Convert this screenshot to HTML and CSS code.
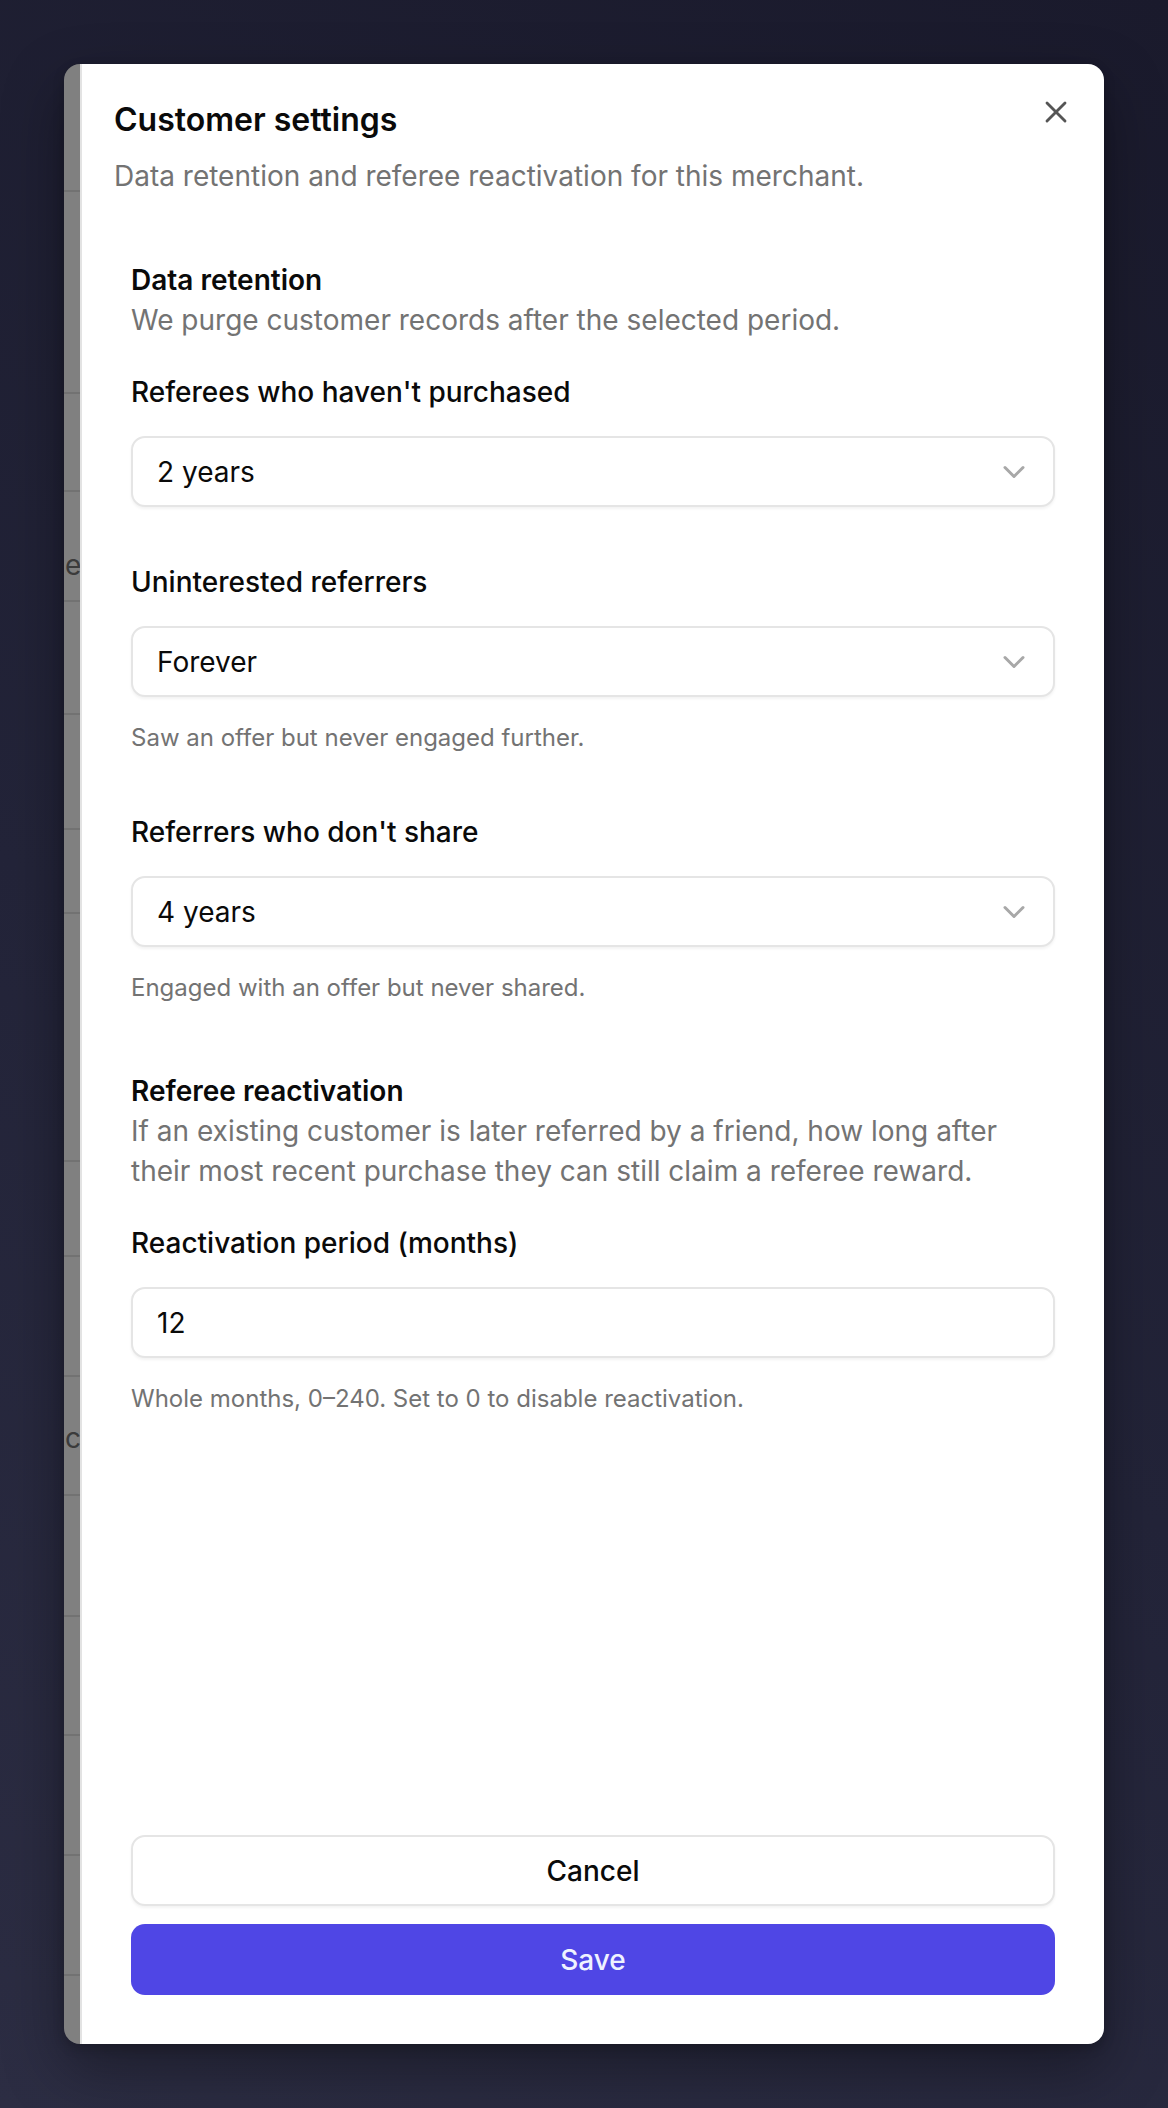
FILE: index.html
```html
<!DOCTYPE html>
<html lang="en">
<head>
<meta charset="utf-8">
<title>Customer settings</title>
<link rel="stylesheet" href="styles.css">
</head>
<body>
<div class="backdrop">
  <div class="dialog">
    <div class="underlay" aria-hidden="true">
      <div class="u-row h128"></div>
      <div class="u-row h202"></div>
      <div class="u-row h98"></div>
      <div class="u-row h110"><span class="u-text t53">e</span></div>
      <div class="u-row h113"></div>
      <div class="u-row h115"></div>
      <div class="u-row h84"></div>
      <div class="u-row h248"></div>
      <div class="u-row h95"></div>
      <div class="u-row h120"></div>
      <div class="u-row h119"><span class="u-text t41">c</span></div>
      <div class="u-row h121"></div>
      <div class="u-row h119"></div>
      <div class="u-row h120"></div>
      <div class="u-row h120"></div>
    </div>

    <section class="sheet">
      <header class="sheet-header">
        <h2 class="sheet-title">Customer settings</h2>
        <p class="sheet-desc">Data retention and referee reactivation for this merchant.</p>
        <button class="close-btn" type="button" aria-label="Close">
          <svg viewBox="0 0 24 24" width="36" height="36" fill="none" stroke="currentColor" stroke-width="1.9" stroke-linecap="round" stroke-linejoin="round"><path d="M18 6 6 18"/><path d="m6 6 12 12"/></svg>
        </button>
      </header>

      <div class="sheet-body">
        <div class="section">
          <h3 class="section-title">Data retention</h3>
          <p class="section-desc">We purge customer records after the selected period.</p>
          <div class="fields">
            <div class="field">
              <label class="field-label">Referees who haven't purchased</label>
              <button class="select" type="button">
                <span>2 years</span>
                <svg viewBox="0 0 24 24" width="36" height="36" fill="none" stroke="currentColor" stroke-width="2" stroke-linecap="round" stroke-linejoin="round"><path d="m6 9 6 6 6-6"/></svg>
              </button>
            </div>
            <div class="field">
              <label class="field-label">Uninterested referrers</label>
              <button class="select" type="button">
                <span>Forever</span>
                <svg viewBox="0 0 24 24" width="36" height="36" fill="none" stroke="currentColor" stroke-width="2" stroke-linecap="round" stroke-linejoin="round"><path d="m6 9 6 6 6-6"/></svg>
              </button>
              <p class="field-help">Saw an offer but never engaged further.</p>
            </div>
            <div class="field">
              <label class="field-label">Referrers who don't share</label>
              <button class="select" type="button">
                <span>4 years</span>
                <svg viewBox="0 0 24 24" width="36" height="36" fill="none" stroke="currentColor" stroke-width="2" stroke-linecap="round" stroke-linejoin="round"><path d="m6 9 6 6 6-6"/></svg>
              </button>
              <p class="field-help">Engaged with an offer but never shared.</p>
            </div>
          </div>
        </div>

        <div class="section section-second">
          <h3 class="section-title">Referee reactivation</h3>
          <p class="section-desc">If an existing customer is later referred by a friend, how long after their most recent purchase they can still claim a referee reward.</p>
          <div class="fields">
            <div class="field">
              <label class="field-label" for="months">Reactivation period (months)</label>
              <input class="text-input" id="months" type="text" value="12">
              <p class="field-help">Whole months, 0–240. Set to 0 to disable reactivation.</p>
            </div>
          </div>
        </div>
      </div>

      <footer class="sheet-footer">
        <button class="btn btn-outline" type="button">Cancel</button>
        <button class="btn btn-primary" type="button">Save</button>
      </footer>
    </section>
  </div>
</div>
</body>
</html>
```

FILE: styles.css
```css
* { box-sizing: border-box; }

html, body {
  margin: 0;
  padding: 0;
}

body {
  width: 1168px;
  height: 2108px;
  font-family: Inter, "Noto Sans", sans-serif;
  background: linear-gradient(30deg, #2c2d43 0%, #232439 45%, #1a1a2c 100%);
  overflow: hidden;
}

.backdrop {
  height: 2108px;
  padding: 64px;
}

.dialog {
  height: 1980px;
  display: flex;
  border-radius: 16px;
  overflow: hidden;
  box-shadow: 0 24px 60px rgba(0, 0, 0, 0.35), 0 4px 12px rgba(0, 0, 0, 0.2);
}

/* dimmed page peeking out behind the sheet */
.underlay {
  flex: none;
  width: 16px;
  background: #808080;
  display: flex;
  flex-direction: column;
  overflow: hidden;
}

.u-row {
  flex: none;
  border-bottom: 2px solid #727272;
  white-space: nowrap;
}

.u-text {
  display: block;
  font-size: 28px;
  line-height: 40px;
  color: #3b3b3b;
  padding-left: 1px;
}

.t53 { padding-top: 53px; }
.t41 { padding-top: 41px; }

.h84 { height: 84px; }
.h95 { height: 95px; }
.h98 { height: 98px; }
.h110 { height: 110px; }
.h113 { height: 113px; }
.h115 { height: 115px; }
.h119 { height: 119px; }
.h120 { height: 120px; }
.h121 { height: 121px; }
.h128 { height: 128px; }
.h202 { height: 202px; }
.h248 { height: 248px; }

.sheet {
  position: relative;
  flex: 1;
  display: flex;
  flex-direction: column;
  background: #ffffff;
  border-left: 2px solid #e3e3e3;
}

.sheet-header {
  padding: 32px 32px 0 32px;
}

.sheet-title {
  margin: 0;
  font-size: 32px;
  line-height: 48px;
  font-weight: 600;
  color: #0a0a0a;
}

.sheet-desc {
  margin: 12px 0 0;
  font-size: 28px;
  line-height: 40px;
  color: #737373;
}

.close-btn {
  position: absolute;
  top: 30px;
  right: 30px;
  width: 36px;
  height: 36px;
  padding: 0;
  border: 0;
  background: transparent;
  color: #555555;
  display: flex;
}

.sheet-body {
  padding: 64px 49px 0;
}

.section-second {
  margin-top: 64px;
}

.section-title {
  margin: 0;
  font-size: 28px;
  line-height: 40px;
  font-weight: 600;
  color: #0a0a0a;
}

.section-desc {
  margin: 0;
  font-size: 28px;
  line-height: 40px;
  color: #737373;
}

.fields {
  margin-top: 32px;
  display: flex;
  flex-direction: column;
  gap: 55px;
}

.field {
  display: flex;
  flex-direction: column;
}

.field-label {
  font-size: 28px;
  line-height: 40px;
  font-weight: 500;
  color: #0a0a0a;
}

.select,
.text-input {
  margin-top: 24px;
  width: 100%;
  height: 71px;
  border: 2px solid #e5e5e5;
  border-radius: 14px;
  background: #ffffff;
  box-shadow: 0 2px 3px rgba(0, 0, 0, 0.05);
  font-family: Inter, "Noto Sans", sans-serif;
  font-size: 28px;
  color: #0a0a0a;
}

.select {
  display: flex;
  align-items: center;
  justify-content: space-between;
  padding: 0 21px 0 24px;
  text-align: left;
}

.select svg {
  color: #a8a8a8;
  flex: none;
}

.text-input {
  display: block;
  padding: 0 24px;
  outline: none;
}

.field-help {
  margin: 25px 0 3px;
  font-size: 24px;
  line-height: 32px;
  color: #737373;
}

.sheet-footer {
  margin-top: auto;
  padding: 0 49px 49px;
  display: flex;
  flex-direction: column;
  gap: 18px;
}

.btn {
  height: 71px;
  border-radius: 14px;
  font-family: Inter, "Noto Sans", sans-serif;
  font-size: 28px;
  font-weight: 500;
}

.btn-outline {
  background: #ffffff;
  border: 2px solid #e5e5e5;
  color: #0a0a0a;
  box-shadow: 0 2px 3px rgba(0, 0, 0, 0.05);
}

.btn-primary {
  background: #4f46e5;
  border: 0;
  color: #eef2ff;
}
```
